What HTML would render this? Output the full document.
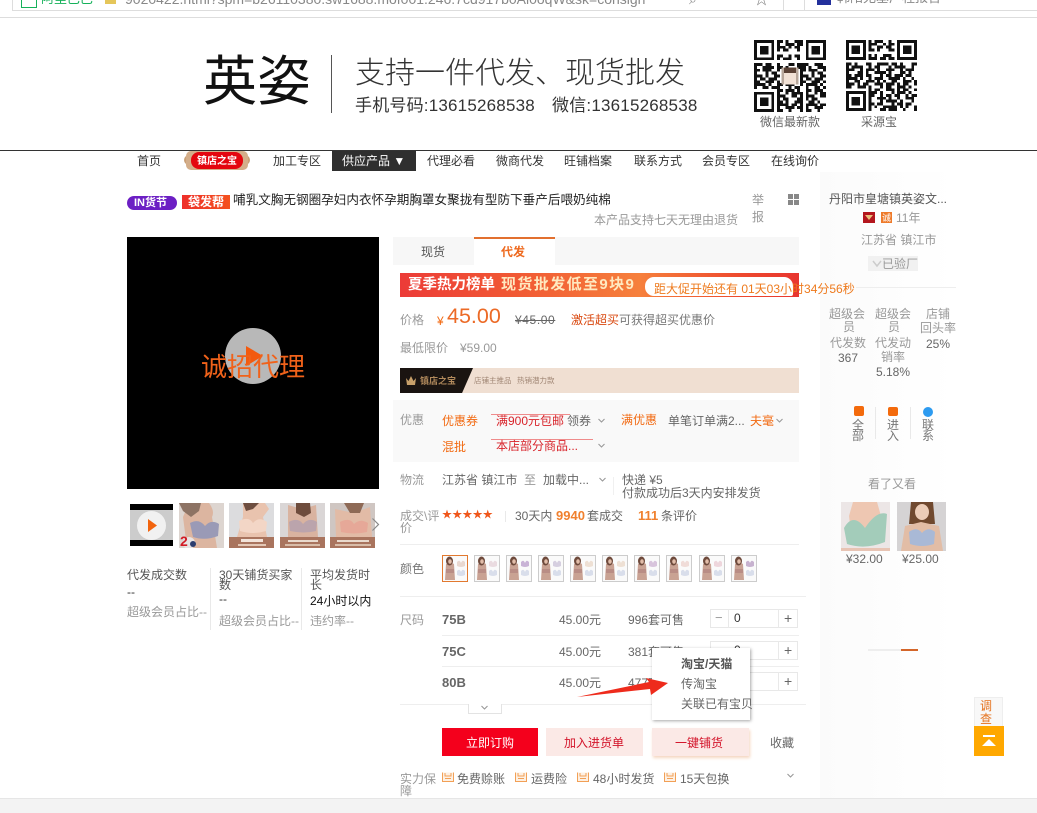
<!DOCTYPE html>
<html lang="zh"><head><meta charset="utf-8"><title>英姿</title>
<style>
html,body{margin:0;padding:0;background:#fff}
#p{position:relative;width:1037px;height:813px;overflow:hidden;background:#fff;font:12px/14px "Liberation Sans","Noto Sans CJK SC",sans-serif;color:#666}
#p div,#p span.t,#p svg.a{position:absolute}
.t{white-space:nowrap}
.g{color:#999}.o{color:#f26a12}.r{color:#d8232a}.d{color:#333}
.n{color:#333;top:154px}
.qty{width:86px;height:17px;left:710px;border:1px solid #e8e8e8;background:#fff}
.sw{width:24px;height:25px;top:555px;border:1px solid #ccc;background:#fff}
.sw svg{display:block}
.sep{background:#e9e9e9;width:1px}
.lin{height:1px;background:#eee}
</style></head><body><div id="p">
<svg width="0" height="0" style="position:absolute"><defs>
<symbol id="s" viewBox="0 0 24 25"><rect width="24" height="25" fill="#fafafa"/><path d="M2 24L3 8Q7 5 11 8L12 24z" fill="#c9a293"/><ellipse cx="6.500" cy="5" rx="3.500" ry="4.500" fill="#6e4a3c"/><ellipse cx="7" cy="5.500" rx="1.800" ry="2.300" fill="#e2bda9"/><path d="M3 13H11V17H3z" fill="#b98d85"/><path d="M14 6Q16.500 3 18 7Q19.500 3 22 6V10Q18 12 14 10z" fill="currentColor"/><path d="M14 15Q16.500 12 18 16Q19.500 12 22 15V19Q18 21 14 19z" fill="#d9deeb"/></symbol>
<symbol id="i" viewBox="0 0 12 10"><path d="M.5 .5V9.500H11.500V.5" fill="#fdf0e3" stroke="#f2a056"/><path d="M3 1V4H9V1M3 6.500H9" fill="none" stroke="#f2a056"/></symbol>
<symbol id="c" viewBox="0 0 9 6"><path d="M1.500 1L4.500 4L7.500 1" fill="none" stroke="#999" stroke-width="1.100"/></symbol>
</defs></svg>

<div style="left:0;top:0;width:1037px;height:18px;background:#fff;border-bottom:1px solid #ddd;box-sizing:border-box"></div>
<div style="left:12px;top:-1px;width:1025px;height:12px;border:1px solid #ddd;box-sizing:border-box;border-right:0"></div>
<div style="left:21px;top:-6px;width:14px;height:12px;border:1px solid #15b15a"></div>
<span class="t" style="left:41px;top:-8px;color:#15b15a;font-size:13px">阿里巴巴</span>
<div style="left:105px;top:-4px;width:11px;height:8px;background:#e5c65a"></div>
<span class="t" style="left:125px;top:-8px;font-size:14px;color:#888">9020422.html?spm=b26110380.sw1688.mof001.246.7cd917b0Al0oqW&amp;sk=consign</span>
<span class="t" style="left:689px;top:-8px;font-size:14px;color:#888">⌕</span>
<span class="t" style="left:754px;top:-7px;font-size:15px;color:#777">☆</span>
<div class="sep" style="left:783px;top:0;height:11px;background:#ddd"></div>
<div class="sep" style="left:804px;top:0;height:11px;background:#ddd"></div>
<div style="left:817px;top:-1px;width:14px;height:6px;background:#23309c"></div>
<span class="t" style="left:837px;top:-9px;font-size:13px;color:#888">韩阳无基厂程报告</span>

<span class="t" style="left:203px;top:45px;font-size:54px;line-height:74px;color:#111">英姿</span>
<div style="left:331px;top:55px;width:1px;height:58px;background:#555"></div>
<span class="t" style="left:355px;top:55px;font-size:30px;line-height:38px;color:#333;font-weight:300">支持一件代发、现货批发</span>
<span class="t" style="left:355px;top:94px;font-size:17px;line-height:24px;color:#333;letter-spacing:.2px">手机号码:13615268538</span>
<span class="t" style="left:552px;top:94px;font-size:17px;line-height:24px;color:#333;letter-spacing:.2px">微信:13615268538</span>

<svg class="a" style="left:754px;top:40px" width="72" height="72" viewBox="0 0 25 25" shape-rendering="crispEdges">
<g stroke="#111" fill="none"><path d="M8 .5H17" stroke-dasharray="2 1 1 2 3"/><path d="M8 1.500H17" stroke-dasharray="1 2 3 1 2"/><path d="M8 2.500H17" stroke-dasharray="3 1 1 1 2 1"/><path d="M8 3.500H17" stroke-dasharray="1 1 2 3"/><path d="M8 5.500H17" stroke-dasharray="2 2 1 1"/><path d="M8 6.500H17" stroke-dasharray="1 1 3 2"/>
<path d="M0 8.500H25" stroke-dasharray="3 1 2 2 1 3 2 1 4 2"/><path d="M0 9.500H25" stroke-dasharray="1 2 4 1 2 1 1 3 3 1"/><path d="M0 10.500H9M16 10.500H25" stroke-dasharray="2 1 3 2 1"/><path d="M0 11.500H9M16 11.500H25" stroke-dasharray="1 3 1 1 2"/><path d="M0 12.500H9M16 12.500H25" stroke-dasharray="3 1 1 2"/><path d="M0 13.500H9M16 13.500H25" stroke-dasharray="1 1 2 1 3"/><path d="M0 14.500H9M16 14.500H25" stroke-dasharray="2 2 3 1"/><path d="M0 15.500H25" stroke-dasharray="4 1 1 2 2 1 3 2 1 1"/><path d="M0 16.500H25" stroke-dasharray="1 2 2 1 3 3 1 1 2 2"/>
<path d="M8 17.500H25" stroke-dasharray="2 1 3 1 1 2"/><path d="M8 18.500H25" stroke-dasharray="1 2 1 1 4 1"/><path d="M8 19.500H25" stroke-dasharray="3 2 2 1 1 1"/><path d="M8 20.500H25" stroke-dasharray="1 1 2 3 2 1"/><path d="M8 21.500H25" stroke-dasharray="2 1 1 2 3 2"/><path d="M8 22.500H25" stroke-dasharray="4 1 2 1 1 1"/><path d="M8 23.500H25" stroke-dasharray="1 2 3 1 2 1"/><path d="M8 24.500H25" stroke-dasharray="2 2 1 3 1 1"/></g>
<path fill="#111" fill-rule="evenodd" d="M0 0h7v7H0zM1 1v5h5V1zM2 2h3v3H2zM18 0h7v7h-7zM19 1v5h5V1zM20 2h3v3h-3zM0 18h7v7H0zM1 19v5h5v-5zM2 20h3v3H2z"/>
<rect x="9.500" y="9.500" width="6" height="6" fill="#b8a89c"/><rect x="10.500" y="10.500" width="4" height="5" fill="#f2e2d6"/><rect x="10.500" y="9.500" width="4" height="2" fill="#5a4236"/></svg>
<svg class="a" style="left:846px;top:40px" width="71" height="71" viewBox="0 0 25 25" shape-rendering="crispEdges">
<g stroke="#111" fill="none"><path d="M8 .5H17" stroke-dasharray="1 1 3 2"/><path d="M8 1.500H17" stroke-dasharray="3 2 1 1"/><path d="M8 2.500H17" stroke-dasharray="1 2 2 1 2"/><path d="M8 3.500H17" stroke-dasharray="2 1 1 3"/><path d="M8 5.500H17" stroke-dasharray="1 1 1 2 3"/><path d="M8 6.500H17" stroke-dasharray="3 1 2 1"/>
<path d="M0 8.500H25" stroke-dasharray="2 1 1 3 2 2 4 1"/><path d="M0 9.500H25" stroke-dasharray="1 1 4 2 1 1 2 3"/><path d="M0 10.500H25" stroke-dasharray="3 2 1 1 3 1 1 2"/><path d="M0 11.500H25" stroke-dasharray="1 3 2 1 1 2 4 1"/><path d="M0 12.500H25" stroke-dasharray="2 1 3 1 2 3 1 1"/><path d="M0 13.500H25" stroke-dasharray="4 1 1 2 1 1 3 2"/><path d="M0 14.500H25" stroke-dasharray="1 2 2 2 3 1 1 1"/><path d="M0 15.500H25" stroke-dasharray="3 1 1 1 2 2 3 1"/><path d="M0 16.500H25" stroke-dasharray="2 2 3 1 1 3 1 1"/>
<path d="M8 17.500H25" stroke-dasharray="1 1 2 2 3 1"/><path d="M8 18.500H25" stroke-dasharray="3 1 1 3 1 1"/><path d="M8 19.500H25" stroke-dasharray="2 2 1 1 2 1"/><path d="M8 20.500H25" stroke-dasharray="1 2 3 1 1 2"/><path d="M8 21.500H25" stroke-dasharray="1 3 1 1 4 1"/><path d="M8 22.500H25" stroke-dasharray="2 1 2 3 1 1"/><path d="M8 23.500H25" stroke-dasharray="1 1 1 2 5 1"/><path d="M8 24.500H25" stroke-dasharray="1 3 2 1 3 2"/></g>
<path fill="#111" fill-rule="evenodd" d="M0 0h7v7H0zM1 1v5h5V1zM2 2h3v3H2zM18 0h7v7h-7zM19 1v5h5V1zM20 2h3v3h-3zM0 18h7v7H0zM1 19v5h5v-5zM2 20h3v3H2z"/></svg>
<span class="t" style="left:760px;top:115px;color:#666">微信最新款</span>
<span class="t" style="left:861px;top:115px;color:#666">采源宝</span>

<div style="left:0;top:150px;width:1037px;height:1px;background:#333"></div>
<div style="left:332px;top:151px;width:84px;height:20px;background:#2f2f2f"></div>
<span class="t n" style="left:137px">首页</span>
<div style="left:184px;top:155px;width:66px;height:10px;border-radius:5px;background:#c9a077"></div>
<div style="left:186px;top:151px;width:62px;height:19px;border-radius:5px;background:#d4ae8a"></div>
<div style="left:191px;top:152px;width:52px;height:17px;border-radius:8px;background:#e4060f"></div>
<span class="t" style="left:197px;top:155px;color:#fff;font-weight:bold;font-size:10px;line-height:13px">镇店之宝</span>
<span class="t n" style="left:273px">加工专区</span>
<span class="t" style="left:342px;top:154px;color:#fff">供应产品 ▼</span>
<span class="t n" style="left:427px">代理必看</span>
<span class="t n" style="left:496px">微商代发</span>
<span class="t n" style="left:564px">旺铺档案</span>
<span class="t n" style="left:634px">联系方式</span>
<span class="t n" style="left:702px">会员专区</span>
<span class="t n" style="left:771px">在线询价</span>

<div style="left:820px;top:172px;width:135px;height:626px;background:linear-gradient(90deg,#fbfbfb,#fdfdfd 50%,#fff)"></div>

<div style="left:127px;top:196px;width:50px;height:14px;border-radius:7px;background:#6c1fc4"></div>
<span class="t" style="left:134px;top:196px;color:#fff;font-weight:bold;font-size:11px">IN货节</span>
<div style="left:182px;top:195px;width:48px;height:14px;background:linear-gradient(90deg,#ee2f2a,#f4511e)"></div>
<span class="t" style="left:188px;top:195px;color:#fff;font-weight:bold">袋发帮</span>
<span class="t" style="left:233px;top:193px;color:#222;font-size:12.6px">哺乳文胸无钢圈孕妇内衣怀孕期胸罩女聚拢有型防下垂产后喂奶纯棉</span>
<span class="t g" style="left:594px;top:213px">本产品支持七天无理由退货</span>
<span class="t g" style="left:752px;top:193px">举</span><span class="t g" style="left:752px;top:210px">报</span>
<svg class="a" style="left:788px;top:194px" width="11" height="11"><path d="M0 0H5V5H0zM6 0H11V5H6zM0 6H5V11H0zM6 6H11V11H6z" fill="#888"/></svg>

<div style="left:127px;top:237px;width:252px;height:252px;background:#000"></div>
<div style="left:225px;top:328px;width:56px;height:56px;border-radius:50%;background:rgba(255,255,255,.72)"></div>
<svg class="a" style="left:246px;top:346px" width="18" height="20"><path d="M0 0L17 10L0 20z" fill="#f35a0e"/></svg>
<span class="t" style="left:201px;top:350px;font-size:26px;line-height:34px;color:#f0621a">诚招代理</span>

<div style="left:130px;top:504px;width:43px;height:42px;background:#000"></div>
<div style="left:130px;top:510px;width:43px;height:30px;background:#ccc"></div>
<div style="left:137px;top:511px;width:29px;height:29px;border-radius:50%;background:#f1f1f1"></div>
<svg class="a" style="left:148px;top:519px" width="9" height="13"><path d="M0 0L9 6.500L0 13z" fill="#f2640e"/></svg>

<svg class="a" style="left:179px;top:503px" width="45" height="45"><rect width="45" height="45" fill="#ddd5d0"/><path d="M10 0H30Q36 8 33 14L38 45H8L4 14Z" fill="#dcb5a0"/><path d="M0 0H22L20 8L12 14L4 8z" fill="#8d7364"/><path d="M11 20Q20 15 26 23Q32 16 40 21L39 33Q26 38 14 34z" fill="#9a9ab6"/><circle cx="10" cy="40" r="6" fill="#e8e4e4"/><circle cx="14" cy="41" r="3" fill="#2b3d6e"/></svg>
<span class="t" style="left:180px;top:534px;font-weight:bold;color:#d21b25;font-size:14px">2</span>
<svg class="a" style="left:229px;top:503px" width="45" height="45"><rect width="45" height="45" fill="#dcdcde"/><path d="M14 0H36L40 6L34 14L38 34H8L14 14Z" fill="#e9c3ae"/><path d="M14 0H30L24 6L17 8z" fill="#6e4e40"/><path d="M10 18Q20 13 24 20Q30 13 38 19L37 28Q24 32 11 28z" fill="#f3d6c6"/><rect y="34" width="45" height="11" fill="#a9745e"/><rect x="12" y="36" width="22" height="3" fill="#f3e4da"/><rect x="9" y="41" width="28" height="2" fill="#e4c8b6"/></svg>
<svg class="a" style="left:280px;top:503px" width="45" height="45"><rect width="45" height="45" fill="#dad6d6"/><path d="M8 2L22 6L36 2L38 34H8z" fill="#d9b3a0"/><path d="M16 0H30L31 10L24 14L16 10z" fill="#6e4c3c"/><path d="M9 19Q18 14 23 21Q29 14 37 19L36 28Q24 31 10 28z" fill="#bba4ac"/><rect y="34" width="45" height="11" fill="#a9745e"/><rect x="8" y="37" width="30" height="2" fill="#eadacd"/><rect x="5" y="41" width="35" height="2" fill="#d9bda9"/></svg>
<svg class="a" style="left:330px;top:503px" width="45" height="45"><rect width="45" height="45" fill="#cfc6c2"/><path d="M5 6L24 10L40 4L42 34H6z" fill="#e2bba6"/><path d="M14 0H34L30 10L20 10z" fill="#8e6a56"/><path d="M10 19Q20 14 24 21Q30 15 38 20L37 29Q24 32 11 29z" fill="#e6a898"/><rect y="34" width="45" height="11" fill="#a9745e"/><rect x="7" y="37" width="32" height="2" fill="#eadacd"/><rect x="5" y="41" width="36" height="2" fill="#d9bda9"/></svg>
<svg class="a" style="left:371px;top:517px" width="9" height="15"><path d="M1.500 1.500L7.500 7.500L1.500 13.500" fill="none" stroke="#888" stroke-width="1.200"/></svg>

<span class="t" style="left:127px;top:568px;color:#555">代发成交数</span>
<span class="t d" style="left:127px;top:585px">--</span>
<span class="t g" style="left:127px;top:605px">超级会员占比--</span>
<div class="sep" style="left:210px;top:568px;height:62px"></div>
<span class="t" style="left:219px;top:568px;color:#555">30天铺货买家</span>
<span class="t" style="left:219px;top:578px;color:#555">数</span>
<span class="t d" style="left:219px;top:592px">--</span>
<span class="t g" style="left:219px;top:614px">超级会员占比--</span>
<div class="sep" style="left:301px;top:568px;height:62px"></div>
<span class="t" style="left:310px;top:568px;color:#555">平均发货时</span>
<span class="t" style="left:310px;top:578px;color:#555">长</span>
<span class="t" style="left:310px;top:594px;color:#111">24小时以内</span>
<span class="t g" style="left:310px;top:614px">违约率--</span>

<div style="left:393px;top:237px;width:406px;height:28px;background:#f7f7f7"></div>
<div style="left:474px;top:237px;width:81px;height:28px;background:#fff;border-top:2px solid #e2702f;box-sizing:border-box"></div>
<span class="t" style="left:421px;top:245px;color:#555">现货</span>
<span class="t" style="left:501px;top:245px;color:#ee6a1f;font-weight:bold">代发</span>

<div style="left:400px;top:273px;width:399px;height:24px;background:linear-gradient(90deg,#ec3b37,#f15a34 30%,#f6803c 60%,#ee4a2e 85%,#e8352f)"></div>
<span class="t" style="left:408px;top:276px;color:#fff;font-weight:bold;font-size:14.5px;line-height:18px">夏季热力榜单</span>
<span class="t" style="left:501px;top:276px;color:#ffe9c0;font-weight:bold;font-size:15px;line-height:18px;letter-spacing:1.400px">现货批发低至9块9</span>
<div style="left:645px;top:277px;width:148px;height:19px;border-radius:9px 9px 2px 9px;background:#fff"></div>
<span class="t" style="left:654px;top:282px;color:#ee7a1d">距大促开始还有 01天03小时34分56秒</span>

<span class="t g" style="left:400px;top:313px">价格</span>
<span class="t o" style="left:437px;top:314px;font-size:12px">¥</span>
<span class="t" style="left:447px;top:301px;font-size:21.5px;line-height:30px;color:#ec6a26">45.00</span>
<span class="t" style="left:515px;top:313px;color:#666;text-decoration:line-through;letter-spacing:.6px">¥45.00</span>
<span class="t" style="left:571px;top:313px;color:#d9480f">激活超买</span>
<span class="t" style="left:619px;top:313px;color:#777">可获得超买优惠价</span>
<span class="t g" style="left:400px;top:341px">最低限价</span>
<span class="t g" style="left:460px;top:341px">¥59.00</span>

<div style="left:400px;top:368px;width:399px;height:25px;background:#f0dfd2"></div>
<div style="left:400px;top:368px;width:73px;height:25px;background:#1a1411;clip-path:polygon(0 0,100% 0,85% 100%,0 100%)"></div>
<svg class="a" style="left:405px;top:375px" width="12" height="12"><path d="M1 3L3.500 6L6 1L8.500 6L11 3L10 10H2z" fill="#c8a06a"/></svg>
<span class="t" style="left:420px;top:374px;color:#b28a5c;font-size:9px;font-weight:bold">镇店之宝</span>
<span class="t" style="left:474px;top:375px;color:#a08674;font-size:7.500px;line-height:12px">店铺主推品</span>
<span class="t" style="left:517px;top:375px;color:#a08674;font-size:7.500px;line-height:12px">热销潜力款</span>

<div style="left:393px;top:400px;width:406px;height:62px;background:#f9f9f9"></div>
<span class="t g" style="left:400px;top:413px">优惠</span>
<span class="t o" style="left:442px;top:414px">优惠券</span>
<div style="left:491px;top:414px;width:79px;height:1px;background:#ef8b8b"></div>
<span class="t r" style="left:496px;top:414px">满900元包邮</span>
<span class="t" style="left:567px;top:414px">领券</span>
<svg class="a" style="left:597px;top:418px" width="9" height="6"><use href="#c"/></svg>
<span class="t o" style="left:621px;top:413px">满优惠</span>
<span class="t" style="left:668px;top:414px">单笔订单满2...</span>
<span class="t o" style="left:750px;top:414px">夫毫</span>
<svg class="a" style="left:775px;top:418px" width="9" height="6"><use href="#c"/></svg>
<span class="t o" style="left:442px;top:440px">混批</span>
<div style="left:491px;top:439px;width:102px;height:1px;background:#ef8b8b"></div>
<span class="t r" style="left:496px;top:439px">本店部分商品...</span>
<svg class="a" style="left:597px;top:443px" width="9" height="6"><use href="#c"/></svg>

<span class="t g" style="left:400px;top:473px">物流</span>
<span class="t" style="left:442px;top:473px">江苏省 镇江市</span>
<span class="t g" style="left:524px;top:473px">至</span>
<span class="t" style="left:543px;top:473px">加载中...</span>
<svg class="a" style="left:598px;top:477px" width="9" height="6"><use href="#c"/></svg>
<div class="sep" style="left:613px;top:477px;height:18px;background:#f0f0f0"></div>
<span class="t" style="left:622px;top:473px">快递 ¥5</span>
<span class="t" style="left:622px;top:486px">付款成功后3天内安排发货</span>

<span class="t g" style="left:400px;top:509px">成交\评</span>
<span class="t g" style="left:400px;top:521px">价</span>
<span class="t" style="left:442px;top:509px;color:#f0561a;font-size:10px;letter-spacing:.2px">★★★★★</span>
<div class="sep" style="left:505px;top:511px;height:11px"></div>
<span class="t" style="left:515px;top:509px">30天内</span>
<span class="t" style="left:556px;top:509px;color:#f0802e;font-weight:bold;font-size:13px">9940</span>
<span class="t" style="left:587px;top:509px">套成交</span>
<span class="t" style="left:638px;top:509px;color:#f0802e;font-weight:bold;font-size:13px">111</span>
<span class="t" style="left:661px;top:509px">条评价</span>
<div class="lin" style="left:400px;top:544px;width:399px"></div>

<span class="t g" style="left:400px;top:562px;color:#777">颜色</span>
<div class="sw" style="left:442px;border-color:#e2792f;color:#e9d8d0"><svg width="24" height="25"><use href="#s"/></svg></div>
<div class="sw" style="left:474px;color:#eadbe0"><svg width="24" height="25"><use href="#s"/></svg></div>
<div class="sw" style="left:506px;color:#c9b3d6"><svg width="24" height="25"><use href="#s"/></svg></div>
<div class="sw" style="left:538px;color:#d6cfe0"><svg width="24" height="25"><use href="#s"/></svg></div>
<div class="sw" style="left:570px;color:#eee0d4"><svg width="24" height="25"><use href="#s"/></svg></div>
<div class="sw" style="left:602px;color:#eee0d4"><svg width="24" height="25"><use href="#s"/></svg></div>
<div class="sw" style="left:634px;color:#d8c4dc"><svg width="24" height="25"><use href="#s"/></svg></div>
<div class="sw" style="left:666px;color:#f0dcd8"><svg width="24" height="25"><use href="#s"/></svg></div>
<div class="sw" style="left:699px;color:#eed6dc"><svg width="24" height="25"><use href="#s"/></svg></div>
<div class="sw" style="left:731px;color:#c7b2cf"><svg width="24" height="25"><use href="#s"/></svg></div>
<div class="lin" style="left:400px;top:596px;width:406px"></div>

<span class="t g" style="left:400px;top:613px">尺码</span>
<span class="t" style="left:442px;top:613px;font-weight:bold;font-size:13px">75B</span>
<span class="t" style="left:559px;top:613px">45.00元</span>
<span class="t" style="left:628px;top:613px">996套可售</span>
<div class="lin" style="left:442px;top:635px;width:357px"></div>
<span class="t" style="left:442px;top:645px;font-weight:bold;font-size:13px">75C</span>
<span class="t" style="left:559px;top:645px">45.00元</span>
<span class="t" style="left:628px;top:645px">381套可售</span>
<div class="lin" style="left:442px;top:666px;width:357px"></div>
<span class="t" style="left:442px;top:676px;font-weight:bold;font-size:13px">80B</span>
<span class="t" style="left:559px;top:676px">45.00元</span>
<span class="t" style="left:628px;top:676px">477套可售</span>
<div class="lin" style="left:400px;top:704px;width:406px"></div>

<div class="qty" style="top:609px"></div><div class="qty" style="top:641px"></div><div class="qty" style="top:672px"></div>
<div class="sep" style="left:728px;top:609px;height:19px"></div><div class="sep" style="left:778px;top:609px;height:19px"></div>
<div class="sep" style="left:778px;top:641px;height:19px"></div><div class="sep" style="left:778px;top:672px;height:19px"></div>
<span class="t g" style="left:715px;top:611px;font-size:13px">−</span>
<span class="t d" style="left:734px;top:611px">0</span>
<span class="t" style="left:784px;top:611px;font-size:14px">+</span>
<span class="t d" style="left:734px;top:643px">0</span>
<span class="t" style="left:784px;top:643px;font-size:14px">+</span>
<span class="t" style="left:784px;top:674px;font-size:14px">+</span>

<div style="left:468px;top:704px;width:32px;height:9px;border:1px solid #e3e3e3;border-top:0;background:#fff"></div>
<svg class="a" style="left:480px;top:705px" width="9" height="6"><use href="#c"/></svg>

<div style="left:652px;top:648px;width:98px;height:72px;background:#fff;box-shadow:1px 1px 3px rgba(0,0,0,.35)"></div>
<span class="t" style="left:681px;top:657px;font-weight:bold;color:#555">淘宝/天猫</span>
<span class="t" style="left:681px;top:677px">传淘宝</span>
<span class="t" style="left:681px;top:697px">关联已有宝贝</span>
<svg class="a" style="left:575px;top:676px" width="95" height="24"><path d="M2 21L74 6L71 2L93 7L76 19L75 13z" fill="#ee2b1c"/></svg>

<div style="left:442px;top:728px;width:96px;height:28px;background:#f4001c"></div>
<span class="t" style="left:466px;top:736px;color:#fff">立即订购</span>
<div style="left:546px;top:728px;width:97px;height:28px;background:#fbe9e6"></div>
<span class="t" style="left:564px;top:736px;color:#d3142a">加入进货单</span>
<div style="left:652px;top:728px;width:97px;height:28px;background:#fbe9e6;box-shadow:1px 2px 3px #f5d6c0"></div>
<span class="t" style="left:675px;top:736px;color:#d3142a">一键铺货</span>
<span class="t" style="left:770px;top:736px">收藏</span>

<span class="t g" style="left:400px;top:772px">实力保</span>
<span class="t g" style="left:400px;top:784px">障</span>
<svg class="a" style="left:442px;top:772px" width="12" height="10"><use href="#i"/></svg>
<span class="t" style="left:457px;top:772px">免费赊账</span>
<svg class="a" style="left:515px;top:772px" width="12" height="10"><use href="#i"/></svg>
<span class="t" style="left:531px;top:772px">运费险</span>
<svg class="a" style="left:577px;top:772px" width="12" height="10"><use href="#i"/></svg>
<span class="t" style="left:593px;top:772px">48小时发货</span>
<svg class="a" style="left:664px;top:772px" width="12" height="10"><use href="#i"/></svg>
<span class="t" style="left:680px;top:772px">15天包换</span>
<svg class="a" style="left:786px;top:773px" width="9" height="6"><use href="#c"/></svg>

<span class="t" style="left:829px;top:192px;color:#555">丹阳市皇塘镇英姿文...</span>
<div style="left:863px;top:212px;width:12px;height:11px;background:#b3161d"></div>
<svg class="a" style="left:865px;top:214px" width="8" height="7"><path d="M0 1H8L4 6z" fill="#e9c07a"/></svg>
<div style="left:881px;top:212px;width:11px;height:11px;background:#ee7a2a"></div>
<span class="t" style="left:882px;top:211px;color:#fff;font-size:9px">诚</span>
<span class="t g" style="left:896px;top:211px">11年</span>
<span class="t g" style="left:861px;top:233px">江苏省 镇江市</span>
<div style="left:868px;top:256px;width:50px;height:15px;background:#f1f1f1"></div>
<span class="t g" style="left:882px;top:257px">已验厂</span>
<svg class="a" style="left:872px;top:260px" width="10" height="8"><path d="M1 1L5 6L9 1" fill="none" stroke="#ccc" stroke-width="1.500"/></svg>
<div class="lin" style="left:856px;top:287px;width:100px"></div>

<span class="t g" style="left:829px;top:307px">超级会</span><span class="t g" style="left:843px;top:320px">员</span><span class="t g" style="left:830px;top:336px">代发数</span><span class="t" style="left:838px;top:351px">367</span>
<span class="t g" style="left:875px;top:307px">超级会</span><span class="t g" style="left:888px;top:320px">员</span><span class="t g" style="left:875px;top:336px">代发动</span><span class="t g" style="left:881px;top:350px">销率</span><span class="t" style="left:876px;top:365px">5.18%</span>
<span class="t g" style="left:926px;top:307px">店铺</span><span class="t g" style="left:920px;top:321px">回头率</span><span class="t" style="left:926px;top:337px">25%</span>

<div style="left:854px;top:406px;width:10px;height:10px;background:#f36a0c;border-radius:2px"></div>
<div style="left:888px;top:407px;width:10px;height:9px;background:#f36a0c;border-radius:2px"></div>
<div style="left:923px;top:407px;width:10px;height:10px;background:#2d9bf0;border-radius:50%"></div>
<span class="t g" style="left:852px;top:420px;line-height:11px;width:12px;white-space:normal;color:#777">全部</span>
<span class="t g" style="left:887px;top:420px;line-height:11px;width:12px;white-space:normal;color:#777">进入</span>
<span class="t g" style="left:922px;top:420px;line-height:11px;width:12px;white-space:normal;color:#777">联系</span>
<div class="sep" style="left:875px;top:407px;height:32px"></div>
<div class="sep" style="left:910px;top:407px;height:32px"></div>

<span class="t g" style="left:868px;top:477px">看了又看</span>
<svg class="a" style="left:841px;top:502px" width="49" height="49"><rect width="49" height="49" fill="#ece6e6"/><path d="M12 0H36L40 14L36 30H10L8 14Z" fill="#eec7b2"/><path d="M3 26Q12 10 24 26Q36 8 46 12L44 40Q24 48 6 42z" fill="#a3ccba"/><rect y="46" width="49" height="3" fill="#e8c4b4"/></svg>
<svg class="a" style="left:897px;top:502px" width="49" height="49"><rect width="49" height="49" fill="#d5d3d4"/><path d="M14 0H36L38 22H12Z" fill="#70492f"/><ellipse cx="25" cy="10" rx="7" ry="8" fill="#eccdb8"/><path d="M4 49L8 24L24 20L42 24L46 49z" fill="#e2bda6"/><path d="M12 30Q20 24 25 31Q31 24 38 30L37 42Q25 46 13 42z" fill="#a9b9d6"/></svg>
<span class="t" style="left:846px;top:552px;color:#666">¥32.00</span>
<span class="t" style="left:902px;top:552px;color:#666">¥25.00</span>
<div style="left:868px;top:649px;width:33px;height:2px;background:#eee"></div>
<div style="left:901px;top:649px;width:17px;height:2px;background:#d4662a"></div>

<div style="left:974px;top:697px;width:29px;height:30px;background:#f8f8f8;border:1px solid #eee;box-sizing:border-box;overflow:hidden"></div>
<span class="t" style="left:980px;top:700px;width:14px;white-space:normal;line-height:13px;color:#e5711c;height:26px;overflow:hidden">调查问卷</span>
<div style="left:974px;top:726px;width:30px;height:30px;background:#ffa800"></div>
<svg class="a" style="left:981px;top:734px" width="16" height="14"><path d="M2 1H14V3H2zM8 5L15 12H1z" fill="#fff"/></svg>

<div style="left:0;top:798px;width:1037px;height:15px;background:#f3f3f3;border-top:1px solid #e6e6e6;box-sizing:border-box"></div>
</div></body></html>
